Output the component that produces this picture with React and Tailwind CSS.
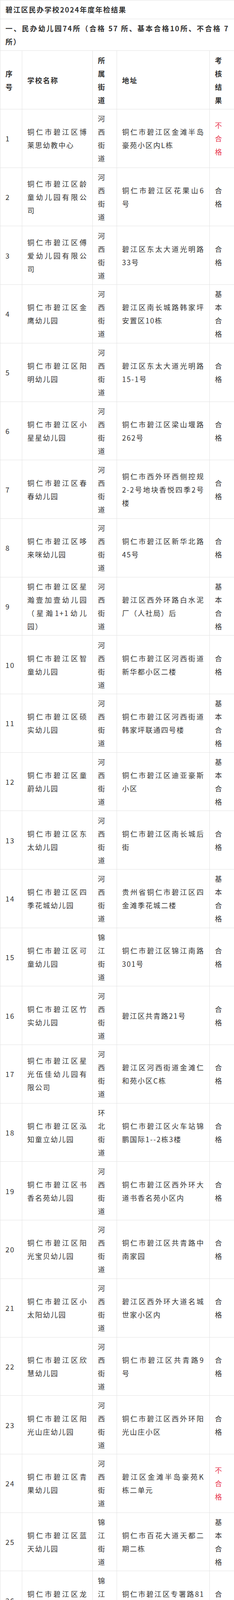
const rows = [
  { id: 1, name: ["铜仁市碧江区博", "莱思幼教中心"], street: "河西街道", addr: ["铜仁市碧江区金滩半岛", "豪苑小区内L栋"], result: "不合格" },
  { id: 2, name: ["铜仁市碧江区龄", "童幼儿园有限公", "司"], street: "河西街道", addr: ["铜仁市碧江区花果山6", "号"], result: "合格" },
  { id: 3, name: ["铜仁市碧江区傅", "爱幼儿园有限公", "司"], street: "河西街道", addr: ["碧江区东太大道光明路", "33号"], result: "合格" },
  { id: 4, name: ["铜仁市碧江区金", "鹰幼儿园"], street: "河西街道", addr: ["碧江区南长城路韩家坪", "安置区10栋"], result: "基本合格" },
  { id: 5, name: ["铜仁市碧江区阳", "明幼儿园"], street: "河西街道", addr: ["碧江区东太大道光明路", "15-1号"], result: "合格" },
  { id: 6, name: ["铜仁市碧江区小", "星星幼儿园"], street: "河西街道", addr: ["铜仁市碧江区梁山堰路", "262号"], result: "合格" },
  { id: 7, name: ["铜仁市碧江区春", "春幼儿园"], street: "河西街道", addr: ["铜仁市西外环西侧控规", "2-2号地块香悦四季2号", "楼"], result: "合格" },
  { id: 8, name: ["铜仁市碧江区哆", "来咪幼儿园"], street: "河西街道", addr: ["铜仁市碧江区新华北路", "45号"], result: "合格" },
  { id: 9, name: ["铜仁市碧江区星", "瀚壹加壹幼儿园", "（星瀚1+1幼儿", "园）"], street: "河西街道", addr: ["碧江区西外环路白水泥", "厂（人社局）后"], result: "基本合格" },
  { id: 10, name: ["铜仁市碧江区智", "童幼儿园"], street: "河西街道", addr: ["铜仁市碧江区河西街道", "新华都小区二楼"], result: "合格" },
  { id: 11, name: ["铜仁市碧江区硕", "实幼儿园"], street: "河西街道", addr: ["铜仁市碧江区河西街道", "韩家坪联通四号楼"], result: "基本合格" },
  { id: 12, name: ["铜仁市碧江区童", "蔚幼儿园"], street: "河西街道", addr: ["铜仁市碧江区迪亚豪斯", "小区"], result: "基本合格" },
  { id: 13, name: ["铜仁市碧江区东", "太幼儿园"], street: "河西街道", addr: ["铜仁市碧江区南长城后", "街"], result: "合格" },
  { id: 14, name: ["铜仁市碧江区四", "季花城幼儿园"], street: "河西街道", addr: ["贵州省铜仁市碧江区四", "金滩季花城二楼"], result: "基本合格" },
  { id: 15, name: ["铜仁市碧江区可", "童幼儿园"], street: "锦江街道", addr: ["铜仁市碧江区锦江南路", "301号"], result: "合格" },
  { id: 16, name: ["铜仁市碧江区竹", "实幼儿园"], street: "河西街道", addr: ["碧江区共青路21号"], result: "合格" },
  { id: 17, name: ["铜仁市碧江区星", "光伍佳幼儿园有", "限公司"], street: "河西街道", addr: ["碧江区河西街道金滩仁", "和苑小区C栋"], result: "合格" },
  { id: 18, name: ["铜仁市碧江区泓", "知童立幼儿园"], street: "环北街道", addr: ["铜仁市碧江区火车站锦", "鹏国际1--2栋3楼"], result: "合格" },
  { id: 19, name: ["铜仁市碧江区书", "香名苑幼儿园"], street: "河西街道", addr: ["铜仁市碧江区西外环大", "道书香名苑小区内"], result: "合格" },
  { id: 20, name: ["铜仁市碧江区阳", "光宝贝幼儿园"], street: "河西街道", addr: ["铜仁市碧江区共青路中", "南家园"], result: "合格" },
  { id: 21, name: ["铜仁市碧江区小", "太阳幼儿园"], street: "河西街道", addr: ["碧江区西外环大道名城", "世家小区内"], result: "合格" },
  { id: 22, name: ["铜仁市碧江区欣", "慧幼儿园"], street: "河西街道", addr: ["铜仁市碧江区共青路9", "号"], result: "合格" },
  { id: 23, name: ["铜仁市碧江区阳", "光山庄幼儿园"], street: "河西街道", addr: ["铜仁市碧江区西外环阳", "光山庄小区"], result: "合格" },
  { id: 24, name: ["铜仁市碧江区青", "果幼儿园"], street: "河西街道", addr: ["碧江区金滩半岛豪苑K", "栋二单元"], result: "不合格" },
  { id: 25, name: ["铜仁市碧江区蓝", "天幼儿园"], street: "锦江街道", addr: ["铜仁市百花大道天都二", "期二栋"], result: "基本合格" },
  { id: 26, name: ["铜仁市碧江区龙", "井幼儿园"], street: "锦江街道", addr: ["铜仁市碧江区专署路81", "号"], result: "合格" },
  { id: 27, name: ["铜仁市碧江区才", "智幼儿园"], street: "锦江街道", addr: ["碧江区解放路77号"], result: "合格" },
];

const cell = "border border-[#e3e3e3] px-[13px] py-[6.35px] align-middle text-left";

// 多行文字：除最后一行外两端对齐
function Lines({ lines }) {
  return lines.map((line, i) => (
    <div
      key={i}
      className={i < lines.length - 1 ? "text-justify [text-align-last:justify]" : ""}
    >
      {line}
    </div>
  ));
}

export default function App() {
  return (
    <div className="w-[600px] bg-white text-[#333333] font-['Noto_Sans_CJK_SC',sans-serif] text-[18px] leading-[34px] tracking-[2px]">
      <table className="w-[600px] table-fixed border-collapse">
        <colgroup>
          <col className="w-[56px]" />
          <col className="w-[181px]" />
          <col className="w-[62px]" />
          <col className="w-[238px]" />
          <col className="w-[63px]" />
        </colgroup>
        <tbody>
          <tr>
            <td colSpan={5} className={`${cell} font-bold`}>
              碧江区民办学校2024年度年检结果
            </td>
          </tr>
          <tr>
            <td colSpan={5} className={`${cell} font-bold`}>
              <Lines lines={["一、民办幼儿园74所（合格 57 所、基本合格10所、不合格 7", "所）"]} />
            </td>
          </tr>
          <tr className="font-bold">
            <td className={cell}>序号</td>
            <td className={cell}>学校名称</td>
            <td className={cell}>所属街道</td>
            <td className={cell}>地址</td>
            <td className={cell}>考核结果</td>
          </tr>
          {rows.map((row) => (
            <tr key={row.id}>
              <td className={cell}>{row.id}</td>
              <td className={cell}>
                <Lines lines={row.name} />
              </td>
              <td className={cell}>{row.street}</td>
              <td className={cell}>
                <Lines lines={row.addr} />
              </td>
              <td className={`${cell} ${row.result === "不合格" ? "text-[#e8364e]" : ""}`}>
                {row.result}
              </td>
            </tr>
          ))}
        </tbody>
      </table>
    </div>
  );
}
